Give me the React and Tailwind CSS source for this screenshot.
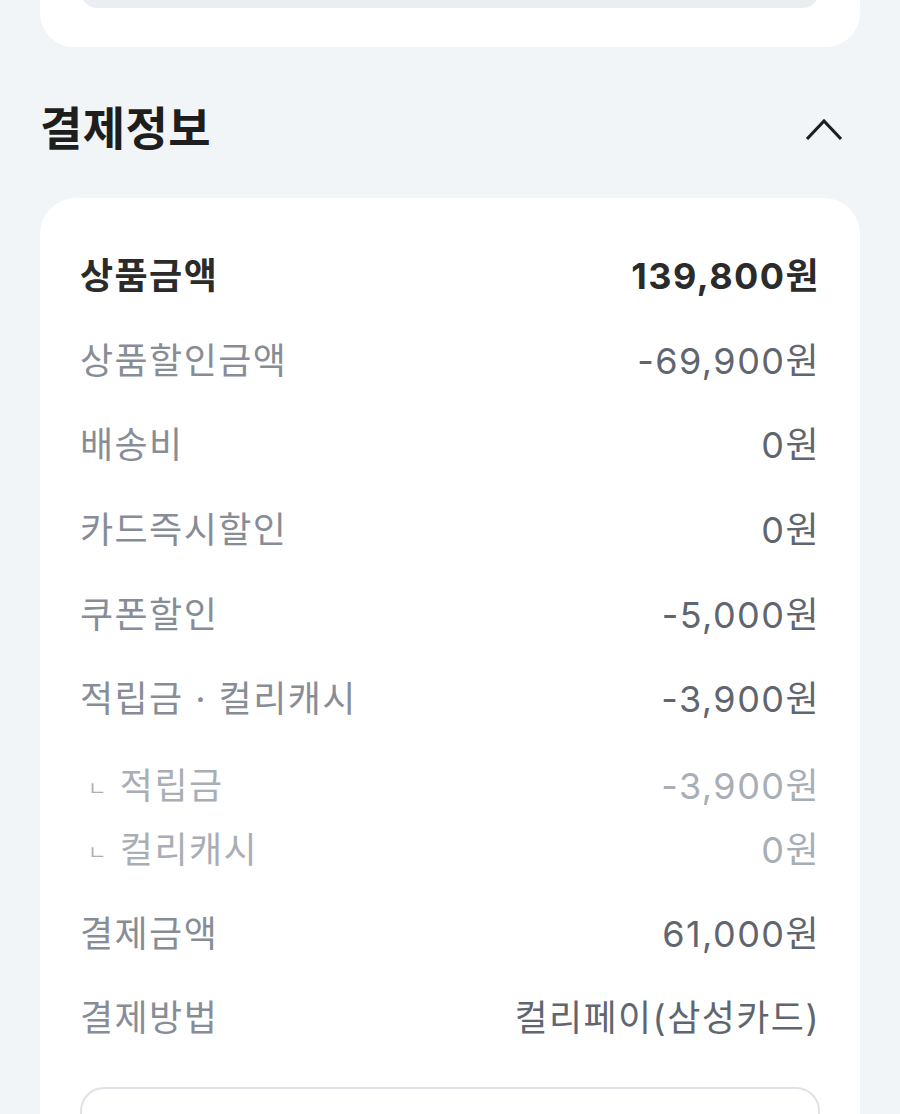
const font = { fontFamily: 'Inter, "Noto Sans CJK KR", "Noto Sans", sans-serif' };

const rows = [
  { label: '상품할인금액', value: '-69,900원' },
  { label: '배송비', value: '0원' },
  { label: '카드즉시할인', value: '0원' },
  { label: '쿠폰할인', value: '-5,000원' },
  { label: '적립금 · 컬리캐시', value: '-3,900원' },
];

const subRows = [
  { label: '적립금', value: '-3,900원' },
  { label: '컬리캐시', value: '0원' },
];

const bottomRows = [
  { label: '결제금액', value: '61,000원' },
  { label: '결제방법', value: '컬리페이(삼성카드)' },
];

function Row({ label, value }) {
  return (
    <div className="flex h-[84.6px] items-center justify-between text-[36px] tracking-[0.04em]">
      <span className="text-[#878d96]">{label}</span>
      <span className="text-[#5f6670]">{value}</span>
    </div>
  );
}

export default function App() {
  return (
    <div className="h-[1114px] overflow-hidden bg-[#f2f5f8] px-10" style={font}>
      {/* previous card, cut off at the top */}
      <div className="-mt-[40px] h-[87px] rounded-b-[34px] bg-white px-10">
        <div className="h-[48px] rounded-b-[18px] bg-[#eaedf2]" />
      </div>

      <div className="flex h-[151px] items-center justify-between pt-[12px]">
        <h2 className="text-[46px] font-bold tracking-[0.01em] text-[#1e1e1e]">결제정보</h2>
        <svg width="40" height="26" viewBox="0 0 40 26" fill="none" className="mr-[16px]">
          <path d="M3 23 L20 5 L37 23" stroke="#1f1f1f" strokeWidth="3.2" strokeLinecap="butt" />
        </svg>
      </div>

      <div className="rounded-t-[36px] bg-white px-10 pt-[36px]">
        <div className="flex h-[84.6px] items-center justify-between text-[36px] font-bold tracking-[0.04em] text-[#2b2b2b]">
          <span>상품금액</span>
          <span>139,800원</span>
        </div>
        {rows.map((r) => (
          <Row key={r.label} {...r} />
        ))}
        <div className="pt-[12px] pb-[10px]">
          {subRows.map((r) => (
            <div
              key={r.label}
              className="flex h-[64px] items-center justify-between text-[36px] tracking-[0.04em] text-[#a9aeb6]"
            >
              <span className="flex items-center">
                <span className="ml-[8px] mr-[12px] mt-[6px] text-[20px]">ㄴ</span>
                {r.label}
              </span>
              <span>{r.value}</span>
            </div>
          ))}
        </div>
        {bottomRows.map((r) => (
          <Row key={r.label} {...r} />
        ))}
        <div className="mt-[26px] h-[80px] rounded-[24px] border-2 border-[#dfe2e6]" />
      </div>
    </div>
  );
}
